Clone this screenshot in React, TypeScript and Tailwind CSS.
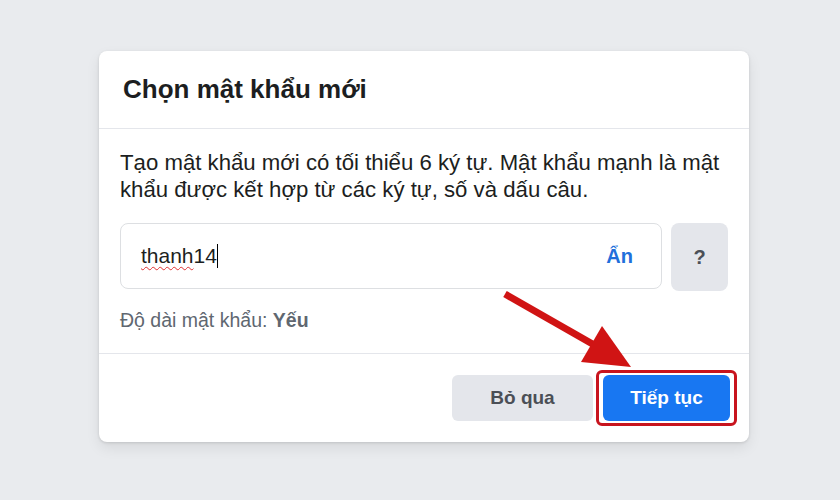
import React from 'react';

export default function App() {
  return (
    <div
      className="relative w-[840px] h-[500px] bg-[#e9ebee] overflow-hidden pl-[99px] pt-[51px]"
      style={{ fontFamily: '"Liberation Sans", Arial, sans-serif' }}
    >
      {/* card */}
      <div className="w-[650px] bg-white rounded-[8px] shadow-[0_1px_3px_rgba(0,0,0,0.12),0_6px_14px_rgba(0,0,0,0.08)]">
        <div className="h-[78px] px-[24px] flex items-center border-b border-[#e4e6eb]">
          <h2 className="text-[26px] font-bold text-[#1c1e21]">Chọn mật khẩu mới</h2>
        </div>

        <div className="px-[21px] pt-[20px] pb-[21px]">
          <p className="text-[22.2px] leading-[27px] text-[#1c1e21]">
            Tạo mật khẩu mới có tối thiểu 6 ký tự. Mật khẩu mạnh là mật khẩu được kết hợp từ các ký tự, số và dấu câu.
          </p>

          <div className="mt-[20px] flex gap-[9px]">
            <div className="flex-1 h-[66px] border border-[#dddfe2] rounded-[8px] flex items-center pl-[20px] pr-[28px]">
              <span className="text-[21px] text-[#1c1e21]">
                <span className="underline decoration-wavy decoration-[#e03030] decoration-1 underline-offset-[3px]">thanh</span>14
              </span>
              <span className="w-px h-[24px] bg-black" />
              <span className="ml-auto text-[20px] font-bold text-[#216fdb]">Ẩn</span>
            </div>
            <div className="w-[57px] h-[68px] rounded-[8px] bg-[#e4e6eb] flex items-center justify-center text-[20px] font-bold text-[#4b4f56]">
              ?
            </div>
          </div>

          <div className="mt-[17px] text-[19.5px] leading-[24px] text-[#606770]">
            Độ dài mật khẩu: <span className="font-bold">Yếu</span>
          </div>
        </div>

        <div className="border-t border-[#e4e6eb] h-[89px] flex items-start justify-end gap-[3px] pt-[16px] pr-[12px]">
          <button className="mt-[5px] w-[141px] h-[46px] rounded-[6px] bg-[#e4e6eb] text-[19px] font-bold text-[#4b4f56]">
            Bỏ qua
          </button>
          <span className="border-[3px] border-[#c8141e] rounded-[6px] px-[4px] py-[2px]">
            <button className="block w-[127px] h-[46px] rounded-[6px] bg-[#1877f2] text-[19px] font-bold text-white">
              Tiếp tục
            </button>
          </span>
        </div>
      </div>

      {/* red annotation arrow */}
      <svg className="absolute left-0 top-0 pointer-events-none" width="840" height="500">
        <line x1="505" y1="294" x2="596" y2="346" stroke="#d01414" strokeWidth="7" />
        <polygon points="602,326 581,362 631,367" fill="#d01414" />
      </svg>
    </div>
  );
}
